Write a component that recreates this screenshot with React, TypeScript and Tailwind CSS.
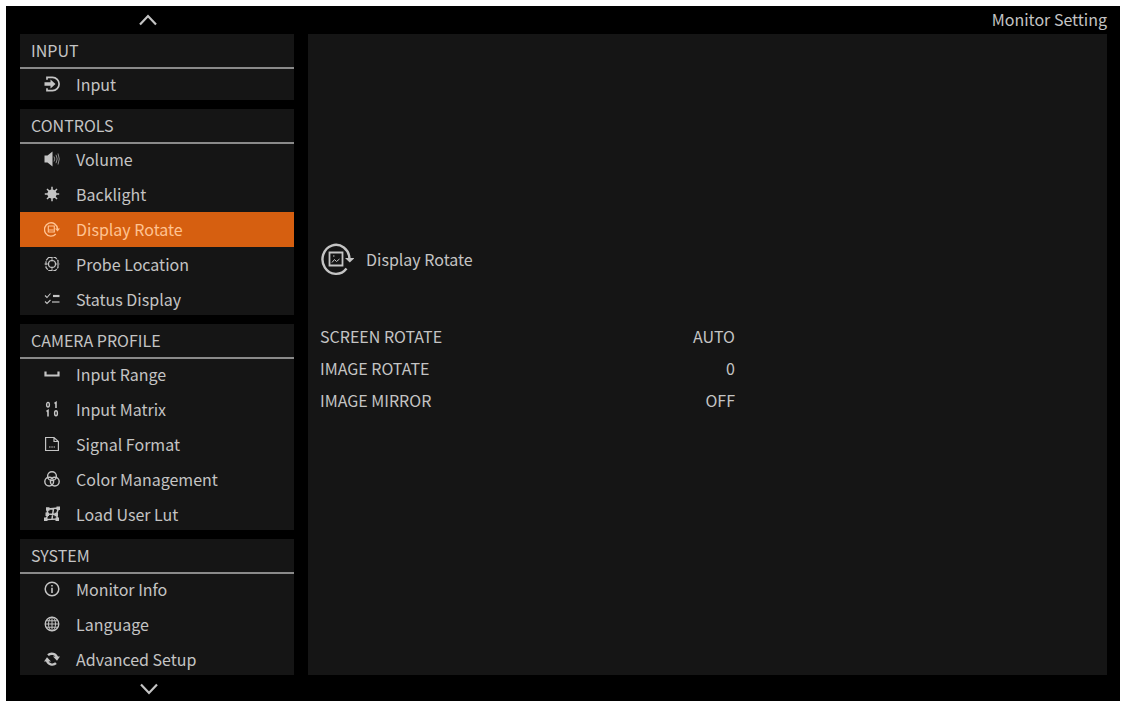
import type { ReactNode } from 'react';
import clsx from 'clsx';

interface MenuItem {
  name: string;
  icon: ReactNode;
}

interface MenuSection {
  title: string;
  items: MenuItem[];
}

function Icon({ children }: { children: ReactNode }) {
  return (
    <svg
      viewBox="0 0 16 16"
      className="size-4 shrink-0"
      fill="none"
      stroke="currentColor"
      strokeWidth="1.2"
      aria-hidden="true"
    >
      {children}
    </svg>
  );
}

const sections: MenuSection[] = [
  {
    title: 'INPUT',
    items: [
      {
        name: 'Input',
        icon: (
          <Icon>
            <path d="M3 3.800V1.400h5.500a6.600 6.600 0 0 1 0 13.200H3v-2.400" strokeWidth="1.700" />
            <path d="M.5 6.200h6V3.500L11.500 8l-5 4.500V9.800h-6z" fill="currentColor" stroke="none" />
          </Icon>
        ),
      },
    ],
  },
  {
    title: 'CONTROLS',
    items: [
      {
        name: 'Volume',
        icon: (
          <Icon>
            <path d="M.5 4.500h3L8.500.5v15l-5-4h-3z" fill="currentColor" stroke="none" />
            <path d="M10 5.500q1.600 2.500 0 5M12 3.800q2.400 4.200 0 8.400M14 2.500q2.500 5.500 0 11" strokeWidth="0.9" opacity="0.75" />
          </Icon>
        ),
      },
      {
        name: 'Backlight',
        icon: (
          <Icon>
            <circle cx="8" cy="8" r="4.600" fill="currentColor" stroke="none" />
            <path d="M8 .8v14.400M.8 8h14.400M3 3l10 10M13 3L3 13" strokeWidth="1.500" />
          </Icon>
        ),
      },
      {
        name: 'Display Rotate',
        icon: (
          <Icon>
            <path d="M13.500 8A6.500 6.700 0 1 0 11.800 13" strokeWidth="1.400" />
            <path d="M4.300 5h6v6h-6zM5 9h4.500" strokeWidth="1.200" />
            <path d="M11 7.500h5L13.500 10.500z" fill="currentColor" stroke="none" />
          </Icon>
        ),
      },
      {
        name: 'Probe Location',
        icon: (
          <Icon>
            <path d="M4.500 1.500h7l2.500 3v7l-2.500 3h-7L2 11.500v-7z" strokeDasharray="4 1" />
            <circle cx="8" cy="8" r="3.500" />
            <path d="M8 1v4.500M8 10.500V15M.5 8H5M11 8h4.500" strokeWidth="0.9" />
          </Icon>
        ),
      },
      {
        name: 'Status Display',
        icon: (
          <Icon>
            <path d="M1 4.500l2 2 3.500-4M1 10.500l2 2 3.500-3.500" strokeWidth="1.100" />
            <path d="M9 5h6.500" strokeWidth="2.200" />
            <path d="M8 11h7.500" strokeWidth="1.200" />
          </Icon>
        ),
      },
    ],
  },
  {
    title: 'CAMERA PROFILE',
    items: [
      {
        name: 'Input Range',
        icon: (
          <Icon>
            <path d="M1.500 5.500v4h13v-4" strokeWidth="2.200" />
          </Icon>
        ),
      },
      {
        name: 'Input Matrix',
        icon: (
          <Icon>
            <ellipse cx="4" cy="3.700" rx="1.400" ry="2.300" strokeWidth="1.400" />
            <path d="M10.500 2.500l1.500-1V7M2.500 10.500l1.500-1V15.500" strokeWidth="1.600" />
            <ellipse cx="12" cy="12.300" rx="1.400" ry="2.500" strokeWidth="1.400" />
          </Icon>
        ),
      },
      {
        name: 'Signal Format',
        icon: (
          <Icon>
            <path d="M1.600 1.500h8.400l4.400 4v9H1.600zM10 1.500v4h4.400" />
            <path d="M5 11h6" strokeDasharray="1.500 .8" />
          </Icon>
        ),
      },
      {
        name: 'Color Management',
        icon: (
          <Icon>
            <circle cx="8" cy="5.200" r="4.400" strokeWidth="1.400" />
            <circle cx="5.200" cy="10.600" r="4.400" strokeWidth="1.400" />
            <circle cx="10.800" cy="10.600" r="4.400" strokeWidth="1.400" />
          </Icon>
        ),
      },
      {
        name: 'Load User Lut',
        icon: (
          <Icon>
            <path d="M3.500 3L14.500 2M4 2.500L3 8l9.500.5M2 13.500l11-.5M9.500 2.500L8 13M14.500 2.500L12.500 8l1 5.500M1.500 13.500L4.500 8" strokeWidth="1.500" />
            <path d="M2 1.200h3.500v3.500H2zM12.500.5H16V4h-3.500zM0 11.500h3.500V15H0zM11.500 11.500H15V15h-3.500zM1.500 6.500H5V10H1.500zM10.500 6.800H14v3.500h-3.500z" fill="currentColor" stroke="none" />
          </Icon>
        ),
      },
    ],
  },
  {
    title: 'SYSTEM',
    items: [
      {
        name: 'Monitor Info',
        icon: (
          <Icon>
            <circle cx="8" cy="8" r="6.800" strokeWidth="1.500" />
            <path d="M8 4v1.500M8 6.800V12" strokeWidth="1.600" />
          </Icon>
        ),
      },
      {
        name: 'Language',
        icon: (
          <Icon>
            <circle cx="8" cy="8" r="6.800" strokeWidth="1.300" />
            <ellipse cx="8" cy="8" rx="3.500" ry="6.800" strokeWidth="1" />
            <path d="M8 1.500v13M1.500 8h13M2.500 4.800h11M2.500 11.200h11" strokeWidth="1" />
          </Icon>
        ),
      },
      {
        name: 'Advanced Setup',
        icon: (
          <Icon>
            <path d="M4 4.200A5.500 5.500 0 0 1 13 6.500M12 12.200A5.500 5.500 0 0 1 3 9.500" strokeWidth="2.400" />
            <path d="M9 5.500h7L13 9.800zM0 10.500h7L3 6.200z" fill="currentColor" stroke="none" />
          </Icon>
        ),
      },
    ],
  },
];

const settings = [
  { name: 'SCREEN ROTATE', value: 'AUTO' },
  { name: 'IMAGE ROTATE', value: '0' },
  { name: 'IMAGE MIRROR', value: 'OFF' },
];

function Chevron({ d }: { d: string }) {
  return (
    <svg viewBox="0 0 18 12" className="h-3 w-[18px]" fill="none" stroke="currentColor" strokeWidth="2.200" aria-hidden="true">
      <path d={d} />
    </svg>
  );
}

function Section({ title, items }: MenuSection) {
  return (
    <section className="bg-[#151515]">
      <h2 className="h-[35px] border-b-2 border-[#8a8a8a] pl-[11px] leading-8">{title}</h2>
      <ul className="-my-0.5">
        {items.map((item) => (
          <li key={item.name}>
            <button
              type="button"
              className={clsx(
                'flex h-[35px] w-full items-center gap-4 pb-0.5 pl-6 text-left',
                item.name === 'Display Rotate' && 'bg-[#d65f10] text-[#ffc392]'
              )}
            >
              {item.icon}
              {item.name}
            </button>
          </li>
        ))}
      </ul>
    </section>
  );
}

export default function App() {
  return (
    <div className="flex min-h-screen flex-col bg-white pt-1.5 pr-px pl-1.5 font-['Noto_Sans_CJK_SC',sans-serif] text-base text-[#c4c4c4]">
      <div className="flex grow flex-col bg-black pr-[13px] pl-3.5">
        <header className="flex h-7 items-center justify-between">
          <div className="flex w-[274px] justify-center pr-[18px]">
            <button type="button" aria-label="Scroll up">
              <Chevron d="M1 10.500L9 2l8 8.500" />
            </button>
          </div>
          <h1 className="pb-0.5 leading-6">Monitor Setting</h1>
        </header>
        <div className="flex grow gap-3.5">
          <nav className="flex w-[274px] shrink-0 flex-col gap-[9px]" aria-label="Settings">
            {sections.map((section) => (
              <Section key={section.title} {...section} />
            ))}
          </nav>
          <main className="grow bg-[#151515] px-3 pt-[207px]">
            <div className="flex h-9 items-center gap-3">
              <svg viewBox="0 0 34 34" className="size-[34px]" fill="none" stroke="currentColor" aria-hidden="true">
                <path d="M26.500 26.500A13.500 14.500 0 1 1 29.500 17" strokeWidth="2.400" />
                <path d="M25 16h9.500l-4.700 4.500z" fill="currentColor" stroke="none" />
                <path d="M9.500 10.500h13v13h-13z" strokeWidth="1.800" />
                <path d="M12 20.500l2.500-3 2 2 3-2.500M13 14h1.500" />
              </svg>
              <h2 className="leading-9">Display Rotate</h2>
            </div>
            <dl className="max-w-[415px] pt-[43px] leading-8">
              {settings.map((setting) => (
                <div key={setting.name} className="flex justify-between">
                  <dt>{setting.name}</dt>
                  <dd>{setting.value}</dd>
                </div>
              ))}
            </dl>
          </main>
        </div>
        <footer className="flex h-[26px] w-[274px] items-center justify-center pt-0.5 pr-4">
          <button type="button" aria-label="Scroll down">
            <Chevron d="M1 1.500L9 10l8-8.500" />
          </button>
        </footer>
      </div>
    </div>
  );
}
